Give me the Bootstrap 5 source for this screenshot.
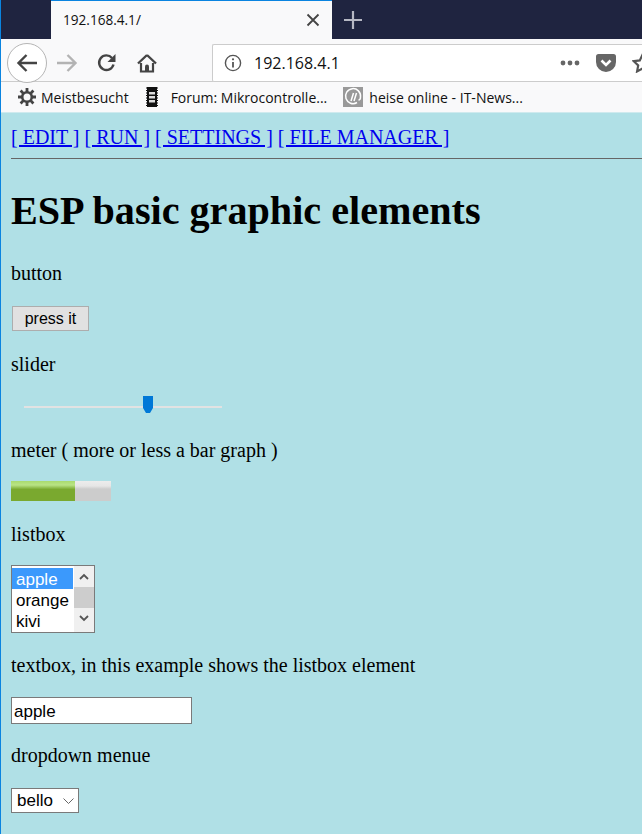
<!DOCTYPE html>
<html>
<head>
  <meta charset="UTF-8">
  <title>ESP basic graphic elements</title>
  <link href="https://cdn.jsdelivr.net/npm/bootstrap@5.3.3/dist/css/bootstrap.min.css" rel="stylesheet">
  <style>
    html, body { height: 100%; }
    body { background: #b0e0e6; overflow: hidden; font-family: "Liberation Serif", serif; color: #000; }
    .win-frame { border-left: 1px solid #0a84e0; min-height: 834px; }
    .chrome { font-family: "Open Sans", "Noto Sans", sans-serif; }

    .tab-strip { height: 39px; background: #1f2440; }
    .tab-gap { width: 50px; }
    .tab-active { width: 281px; background: #f9f9fa; border-top: 1px solid #0a84e0; padding: 0 12px 0 12px; font-size: 13.6px; color: #111; }
    .tab-plus { width: 42px; }

    .tool-bar { height: 43px; background: #f9f9fa; border-bottom: 1px solid #ccc; padding: 5px 0 0 6px; }
    .back-circle { width: 40px; height: 40px; border: 1px solid #b5b5b5; border-radius: 50%; background: #fff; flex: none; }
    .tool-slot { width: 40px; }
    .url-box { margin-left: 45px; height: 38px; flex: 1; background: #fff; border: 1px solid #ccc; border-right: 0; border-radius: 2px 0 0 2px; font-size: 16px; color: #111; padding-left: 11px; }
    .url-text { margin-left: 12px; }
    .star-cut { margin-right: -11px; }

    .mark-bar { height: 31px; background: #f9f9fa; padding-left: 17px; font-size: 14px; color: #111; border-bottom: 1px solid #cfeaee; }
    .mark-item { gap: 5px; }
    .forum-mark { margin-left: 17px; }
    .heise-mark { margin-left: 16px; }
    .heise-text { margin-left: 1px; }

    .page-body { padding: 12px 0 0 10px; font-size: 20px; line-height: 24px; }
    .top-links a { color: #00e; }
    .top-rule { border: 0; border-top: 1px solid #666; opacity: 1; margin: 9px 0 0 0; }
    .page-title { font-family: inherit; font-weight: bold; font-size: 40.16px; line-height: 49px; margin: 27px 0 0 0; }
    .label-line { margin: 0; height: 24px; }
    .widget-row { display: flex; }
    .gap-a { margin-top: 26px; }
    .gap-b { margin-top: 21px; padding-left: 1px; }
    .gap-c { margin-top: 21px; }
    .gap-d { margin-top: 30px; }
    .gap-e { margin-top: 30px; }
    .gap-f { margin-top: 19px; }
    .gap-g { margin-top: 21px; }
    .gap-h { margin-top: 19px; }
    .gap-i { margin-top: 20px; }
    .gap-j { margin-top: 20px; }
    .gap-k { margin-top: 19px; }
    .gap-l { margin-top: 21px; }

    .esp-btn { width: 77px; height: 25px; background: #e1e1e1; border: 1px solid #adadad; font-family: "Liberation Sans", sans-serif; font-size: 16px; line-height: 1; padding: 0; color: #000; border-radius: 0; }
    .slider-track { width: 198px; height: 2px; background: #e2e2e2; margin-left: 13px; position: relative; }
    .slider-thumb { position: absolute; left: 119px; top: -10px; }
    .meter-box { width: 100px; height: 20px; background: linear-gradient(#ececec 0, #e6e6e6 25%, #cccccc 40%, #cccccc 100%); }
    .meter-fill { height: 100%; background: linear-gradient(#aadb6e 0, #b9e486 20%, #7aa92f 42%, #7aa92f 100%); }

    .list-box { width: 84px; height: 68px; border: 1px solid #7a7a7a; background: #fff; font-family: "Liberation Sans", sans-serif; font-size: 17px; line-height: 23px; }
    .list-opts { width: 62px; padding-top: 2px; }
    .list-opts div { padding-left: 4px; height: 21px; }
    .list-opts .picked { background: #3b99fc; color: #fff; margin-right: 1px; }
    .list-scroll { width: 20px; background: #f0f0f0; }
    .scroll-end { height: 21px; }
    .scroll-thumb { height: 21px; background: #cdcdcd; }

    .text-field { width: 181px; height: 27px; border: 1px solid #7a7a7a; background: #fff; border-radius: 0; padding: 3px 2px 0 2px; font-family: "Liberation Sans", sans-serif; font-size: 17px; color: #000; outline: 0; }
    .drop-box { width: 68px; height: 25px; border: 1px solid #7a7a7a; background: #fff; font-family: "Liberation Sans", sans-serif; font-size: 17px; padding-left: 5px; }
  </style>
</head>
<body class="m-0">
  <div class="win-frame">
    <div class="chrome">
      <div class="tab-strip d-flex">
        <div class="tab-gap"></div>
        <div class="tab-active d-flex align-items-center justify-content-between">
          <span>192.168.4.1/</span>
          <svg width="14" height="14" viewBox="0 0 14 14"><path d="M1.500 1.500l11 11M12.500 1.500l-11 11" stroke="#444" stroke-width="1.800" fill="none"/></svg>
        </div>
        <div class="tab-plus d-flex align-items-center justify-content-center">
          <svg width="18" height="18" viewBox="0 0 18 18"><path d="M9 0v18M0 9h18" stroke="#b6b8c4" stroke-width="2.200" fill="none"/></svg>
        </div>
      </div>

      <div class="tool-bar d-flex align-items-center">
        <div class="back-circle d-flex align-items-center justify-content-center">
          <svg width="22" height="20" viewBox="0 0 22 20"><path d="M21 10H3M10.500 2L2.500 10l8 8" stroke="#444" stroke-width="2.400" fill="none"/></svg>
        </div>
        <div class="tool-slot d-flex justify-content-center">
          <svg width="22" height="20" viewBox="0 0 22 20"><path d="M1 10h18M11.500 2l8 8-8 8" stroke="#b3b3b3" stroke-width="2.400" fill="none"/></svg>
        </div>
        <div class="tool-slot d-flex justify-content-center">
          <svg width="20" height="20" viewBox="0 0 20 20"><path d="M16.500 11.500A7.300 7.300 0 1 1 15 5" stroke="#444" stroke-width="2.400" fill="none"/><path d="M18.500 1v8h-8z" fill="#444"/></svg>
        </div>
        <div class="tool-slot d-flex justify-content-center">
          <svg width="20" height="20" viewBox="0 0 20 20"><path d="M10 2L1 10.500M10 2l9 8.500" stroke="#444" stroke-width="2.400" fill="none"/><path d="M4 10v8.500h12V10" stroke="#444" stroke-width="2.200" fill="none"/><path d="M8 18.500v-5a2 2 0 0 1 4 0v5z" fill="#444"/></svg>
        </div>
        <div class="url-box d-flex align-items-center">
          <svg width="18" height="18" viewBox="0 0 18 18"><circle cx="9" cy="9" r="7.600" stroke="#555" stroke-width="1.400" fill="none"/><path d="M9 8v5.500" stroke="#555" stroke-width="1.800"/><circle cx="9" cy="5.300" r="1.100" fill="#555"/></svg>
          <span class="url-text">192.168.4.1</span>
          <div class="ms-auto d-flex align-items-center">
            <svg width="20" height="6" viewBox="0 0 20 6"><circle cx="3" cy="3" r="2.400" fill="#666"/><circle cx="10" cy="3" r="2.400" fill="#666"/><circle cx="17" cy="3" r="2.400" fill="#666"/></svg>
            <svg class="ms-3" width="20" height="18" viewBox="0 0 20 18"><path d="M2.500 0h15A2.500 2.500 0 0 1 20 2.500V8A10 10 0 0 1 0 8V2.500A2.500 2.500 0 0 1 2.500 0z" fill="#666"/><path d="M5.500 6.500L10 11l4.500-4.500" stroke="#fff" stroke-width="2.600" fill="none"/></svg>
            <svg class="ms-3 star-cut" width="21" height="20" viewBox="0 0 21 20"><path d="M10.500 1.800l2.700 5.600 6 .8-4.400 4.200 1.100 6-5.400-2.900-5.400 2.900 1.100-6L1.800 8.200l6-.8z" stroke="#555" stroke-width="2.200" fill="none"/></svg>
          </div>
        </div>
      </div>

      <div class="mark-bar d-flex align-items-center">
        <div class="mark-item d-flex align-items-center">
          <svg width="18" height="18" viewBox="0 0 18 18"><circle cx="9" cy="9" r="4.800" stroke="#444" stroke-width="2.600" fill="none"/><path d="M9 0v4M9 14v4M0 9h4M14 9h4M2.600 2.600l2.800 2.800M12.600 12.600l2.800 2.800M15.400 2.600l-2.800 2.800M5.400 12.600l-2.800 2.800" stroke="#444" stroke-width="2.800"/></svg>
          <span>Meistbesucht</span>
        </div>
        <div class="mark-item forum-mark d-flex align-items-center">
          <svg width="12" height="20" viewBox="0 0 12 20"><path d="M1 0h10v20H1z" fill="#111"/><path d="M0 1h12M0 3.500h12M0 6h12M0 8.500h12M0 11h12M0 13.500h12M0 16h12M0 18.500h12" stroke="#111" stroke-width="1.200"/><path d="M3 5h6v2.500H3zM3 9h6v2.500H3zM3 13h6v2.500H3z" fill="#ddd"/></svg>
          <span class="ms-2">Forum: Mikrocontrolle...</span>
        </div>
        <div class="mark-item heise-mark d-flex align-items-center">
          <svg width="20" height="20" viewBox="0 0 20 20"><path d="M0 0h20v20H0z" fill="#999"/><path d="M14 15.500A7.500 7.500 0 1 1 17.500 10c0 2-1 3-2 3" stroke="#fff" stroke-width="1.500" fill="none"/><path d="M8 14l2.500-8M11 14l2.500-8" stroke="#fff" stroke-width="1.500"/></svg>
          <span class="heise-text">heise online - IT-News...</span>
        </div>
      </div>
    </div>

    <div class="page-body">
      <div class="top-links"><a href="#">[ EDIT ]</a> <a href="#">[ RUN ]</a> <a href="#">[ SETTINGS ]</a> <a href="#">[ FILE MANAGER ]</a></div>
      <hr class="top-rule">
      <h1 class="page-title">ESP basic graphic elements</h1>

      <p class="label-line gap-a">button</p>
      <div class="widget-row gap-b"><button class="esp-btn">press it</button></div>

      <p class="label-line gap-c">slider</p>
      <div class="widget-row gap-d"><div class="slider-track">
        <svg class="slider-thumb" width="10" height="18" viewBox="0 0 10 18"><path d="M0 0h10v12l-3 5H3l-3-5z" fill="#0078d7"/></svg>
      </div></div>

      <p class="label-line gap-e">meter ( more or less a bar graph )</p>
      <div class="widget-row gap-f"><div class="meter-box"><div class="meter-fill" style="width:64%"></div></div></div>

      <p class="label-line gap-g">listbox</p>
      <div class="widget-row gap-h">
        <div class="list-box d-flex">
          <div class="list-opts"><div class="picked">apple</div><div>orange</div><div>kivi</div></div>
          <div class="list-scroll">
            <div class="scroll-end d-flex align-items-center justify-content-center"><svg width="10" height="7" viewBox="0 0 10 7"><path d="M1 6l4-4 4 4" stroke="#555" stroke-width="1.800" fill="none"/></svg></div>
            <div class="scroll-thumb"></div>
            <div class="scroll-end d-flex align-items-center justify-content-center"><svg width="10" height="7" viewBox="0 0 10 7"><path d="M1 1l4 4 4-4" stroke="#555" stroke-width="1.800" fill="none"/></svg></div>
          </div>
        </div>
      </div>

      <p class="label-line gap-i">textbox, in this example shows the listbox element</p>
      <div class="widget-row gap-j"><input class="text-field" type="text" value="apple"></div>

      <p class="label-line gap-k">dropdown menue</p>
      <div class="widget-row gap-l">
        <div class="drop-box d-flex align-items-center justify-content-between">
          <span>bello</span>
          <svg class="me-1" width="11" height="6" viewBox="0 0 11 6"><path d="M.5 .5l5 5 5-5" stroke="#666" stroke-width="1" fill="none"/></svg>
        </div>
      </div>
    </div>
  </div>
  <script src="https://cdn.jsdelivr.net/npm/bootstrap@5.3.3/dist/js/bootstrap.bundle.min.js"></script>
</body>
</html>
